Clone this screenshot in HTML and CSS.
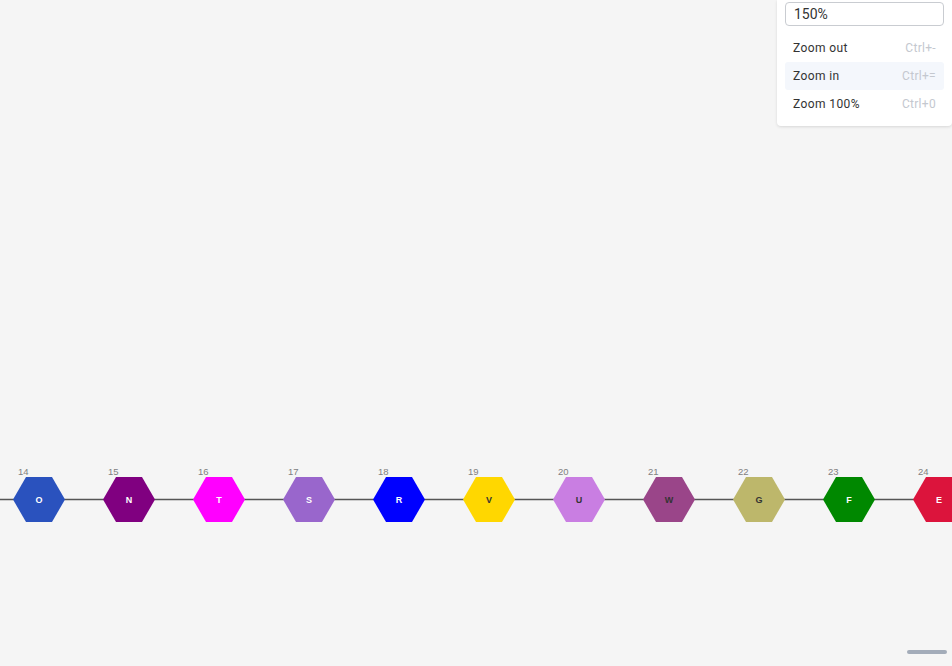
FILE: index.html
```html
<!DOCTYPE html>
<html>
<head>
<meta charset="utf-8">
<link rel="stylesheet" href="styles.css">
</head>
<body>
<div class="canvas">
  <svg class="graph" width="952" height="666" viewBox="0 0 952 666">
    <line x1="0" y1="499.5" x2="952" y2="499.5" class="edge"/>
    <g class="node" transform="translate(39,499.5)"><polygon points="-26,0 -13,-22.5 13,-22.5 26,0 13,22.5 -13,22.5" fill="#2a52be"/><text class="lbl light" y="3.5">O</text><text class="idx" x="-21" y="-24.5">14</text></g>
    <g class="node" transform="translate(129,499.5)"><polygon points="-26,0 -13,-22.5 13,-22.5 26,0 13,22.5 -13,22.5" fill="#800080"/><text class="lbl light" y="3.5">N</text><text class="idx" x="-21" y="-24.5">15</text></g>
    <g class="node" transform="translate(219,499.5)"><polygon points="-26,0 -13,-22.5 13,-22.5 26,0 13,22.5 -13,22.5" fill="#ff00ff"/><text class="lbl light" y="3.5">T</text><text class="idx" x="-21" y="-24.5">16</text></g>
    <g class="node" transform="translate(309,499.5)"><polygon points="-26,0 -13,-22.5 13,-22.5 26,0 13,22.5 -13,22.5" fill="#9966cc"/><text class="lbl light" y="3.5">S</text><text class="idx" x="-21" y="-24.5">17</text></g>
    <g class="node" transform="translate(399,499.5)"><polygon points="-26,0 -13,-22.5 13,-22.5 26,0 13,22.5 -13,22.5" fill="#0000ff"/><text class="lbl light" y="3.5">R</text><text class="idx" x="-21" y="-24.5">18</text></g>
    <g class="node" transform="translate(489,499.5)"><polygon points="-26,0 -13,-22.5 13,-22.5 26,0 13,22.5 -13,22.5" fill="#ffd700"/><text class="lbl dark" y="3.5">V</text><text class="idx" x="-21" y="-24.5">19</text></g>
    <g class="node" transform="translate(579,499.5)"><polygon points="-26,0 -13,-22.5 13,-22.5 26,0 13,22.5 -13,22.5" fill="#c97ee2"/><text class="lbl dark" y="3.5">U</text><text class="idx" x="-21" y="-24.5">20</text></g>
    <g class="node" transform="translate(669,499.5)"><polygon points="-26,0 -13,-22.5 13,-22.5 26,0 13,22.5 -13,22.5" fill="#9a4589"/><text class="lbl dark" y="3.5">W</text><text class="idx" x="-21" y="-24.5">21</text></g>
    <g class="node" transform="translate(759,499.5)"><polygon points="-26,0 -13,-22.5 13,-22.5 26,0 13,22.5 -13,22.5" fill="#bdb76b"/><text class="lbl dark" y="3.5">G</text><text class="idx" x="-21" y="-24.5">22</text></g>
    <g class="node" transform="translate(849,499.5)"><polygon points="-26,0 -13,-22.5 13,-22.5 26,0 13,22.5 -13,22.5" fill="#008800"/><text class="lbl light" y="3.5">F</text><text class="idx" x="-21" y="-24.5">23</text></g>
    <g class="node" transform="translate(939,499.5)"><polygon points="-26,0 -13,-22.5 13,-22.5 26,0 13,22.5 -13,22.5" fill="#dc143c"/><text class="lbl light" y="3.5">E</text><text class="idx" x="-21" y="-24.5">24</text></g>
  </svg>

  <div class="zoom-panel">
    <div class="zoom-input">150%</div>
    <ul class="zoom-menu">
      <li class="zoom-item"><span>Zoom out</span><span class="shortcut">Ctrl+-</span></li>
      <li class="zoom-item active"><span>Zoom in</span><span class="shortcut">Ctrl+=</span></li>
      <li class="zoom-item"><span>Zoom 100%</span><span class="shortcut">Ctrl+0</span></li>
    </ul>
  </div>

  <div class="scroll-thumb"></div>
</div>
</body>
</html>
```

FILE: styles.css
```css
html, body {
  margin: 0;
  padding: 0;
  width: 952px;
  height: 666px;
  overflow: hidden;
  background: #f5f5f5;
  font-family: Roboto, "Liberation Sans", Arial, sans-serif;
}

.canvas {
  position: relative;
  width: 952px;
  height: 666px;
}

.graph {
  position: absolute;
  left: 0;
  top: 0;
}

.edge {
  stroke: #555;
  stroke-width: 1.6;
}

.lbl {
  font-family: "Liberation Sans", Arial, sans-serif;
  font-size: 9px;
  font-weight: bold;
  text-anchor: middle;
}

.lbl.light { fill: #ffffff; }
.lbl.dark { fill: #333333; }

.idx {
  font-family: "Liberation Sans", Arial, sans-serif;
  font-size: 9.5px;
  fill: #808080;
}

.zoom-panel {
  position: absolute;
  top: 0;
  right: 0;
  width: 159px;
  padding: 2px 8px 8px 8px;
  background: #ffffff;
  border-radius: 0 0 4px 4px;
  box-shadow: 0 1px 3px rgba(0, 0, 0, 0.12);
}

.zoom-input {
  height: 22px;
  line-height: 22px;
  border: 1px solid #c9ccd1;
  border-radius: 4px;
  padding: 0 8px;
  font-size: 14px;
  color: #333;
}

.zoom-menu {
  list-style: none;
  margin: 8px 0 0 0;
  padding: 0;
}

.zoom-item {
  display: flex;
  justify-content: space-between;
  align-items: center;
  height: 28px;
  padding: 0 8px;
  font-size: 12px;
  letter-spacing: 0.4px;
  color: #333;
  border-radius: 3px;
}

.zoom-item.active {
  background: #f4f7fc;
}

.shortcut {
  color: #c4c8cf;
  letter-spacing: 0.3px;
}

.scroll-thumb {
  position: absolute;
  left: 907px;
  top: 650px;
  width: 40px;
  height: 4px;
  border-radius: 2px;
  background: #a3acb9;
}
```
